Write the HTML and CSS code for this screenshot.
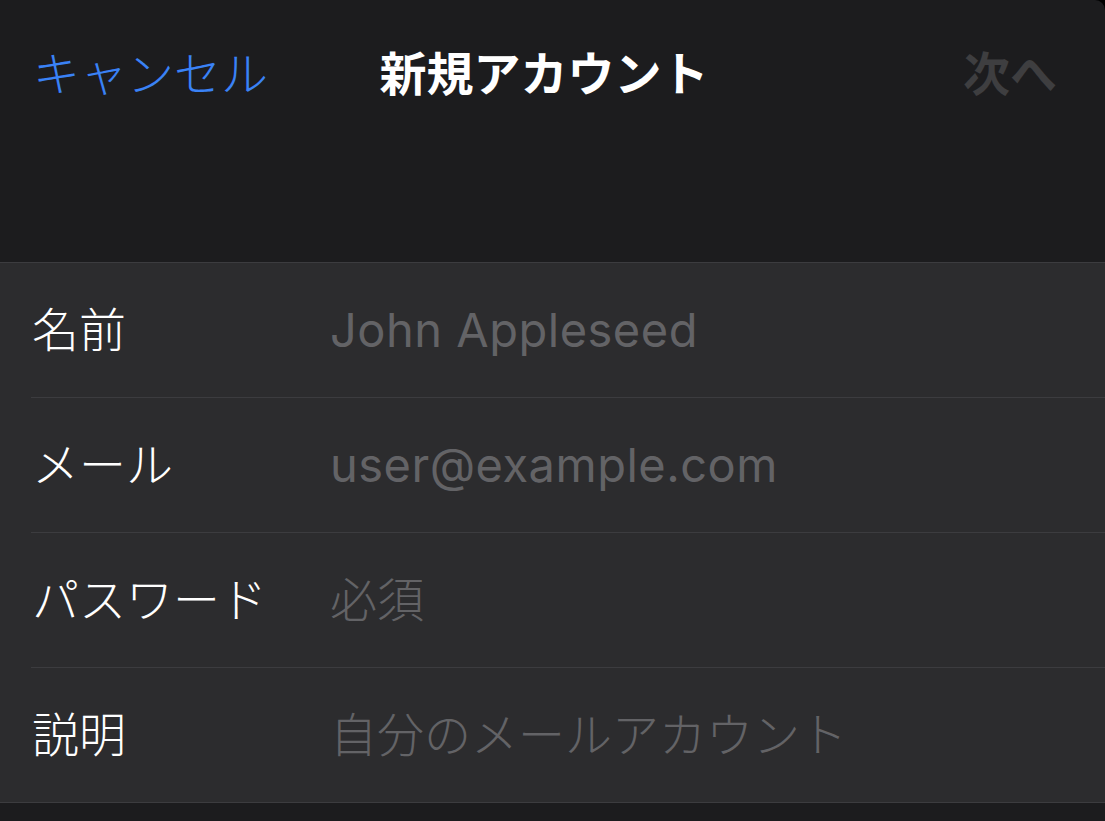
FILE: index.html
```html
<!DOCTYPE html>
<html lang="ja">
<head>
    <meta charset="UTF-8">
    <meta name="viewport" content="width=device-width, initial-scale=1.0">
    <title>新規アカウント</title>
    <link rel="stylesheet" href="styles.css">
</head>
<body>
    <div class="sheet">
        <!-- ナビゲーションバー -->
        <div class="nav-bar">
            <span class="nav-cancel">キャンセル</span>
            <span class="nav-title">新規アカウント</span>
            <span class="nav-next">次へ</span>
        </div>

        <!-- 入力フォーム -->
        <div class="form-group">
            <div class="form-row">
                <span class="row-label">名前</span>
                <span class="row-value latin">John Appleseed</span>
            </div>
            <div class="form-row">
                <span class="row-label">メール</span>
                <span class="row-value latin">user@example.com</span>
            </div>
            <div class="form-row">
                <span class="row-label">パスワード</span>
                <span class="row-value">必須</span>
            </div>
            <div class="form-row">
                <span class="row-label">説明</span>
                <span class="row-value">自分のメールアカウント</span>
            </div>
        </div>
    </div>
</body>
</html>
```

FILE: styles.css
```css
/* ダークモードのシート */
body {
    margin: 0;
    padding: 0;
    background-color: #000;
    font-family: "Noto Sans CJK JP", sans-serif;
    height: 100vh;
    overflow: hidden;
}

.sheet {
    background-color: #1c1c1e;
    height: 100%;
    border-top-right-radius: 10px;
}

.nav-bar {
    display: grid;
    grid-template-columns: 1fr auto 1fr;
    align-items: center;
    height: 140px;
    padding: 0 48px 0 33px;
    margin-bottom: 122px;
    font-size: 47px;
    line-height: 1;
}

.nav-cancel {
    color: #3a82f6;
    font-weight: 300;
}

.nav-title {
    color: #fff;
    font-weight: bold;
    margin-left: -2px;
}

.nav-next {
    justify-self: end;
    color: #3e3e40;
    font-weight: bold;
}

.form-group {
    background-color: #2c2c2e;
    border-top: 1px solid #3c3c3f;
    border-bottom: 1px solid #3c3c3f;
}

.form-row {
    display: flex;
    align-items: center;
    box-sizing: border-box;
    height: 135px;
    padding-bottom: 7px;
    margin-left: 31px;
    border-bottom: 1px solid #3c3c3f;
    font-size: 47px;
}

.form-row:last-child {
    height: 134px;
    border-bottom: none;
}

.row-label {
    width: 298px;
    padding-left: 1px;
    color: #fff;
    font-weight: 300;
}

.row-value {
    color: #636366;
    font-weight: 300;
}

.row-value.latin {
    font-family: Inter, "Noto Sans CJK JP", sans-serif;
    font-weight: 400;
    letter-spacing: 0.5px;
    padding-top: 6px;
}
```
